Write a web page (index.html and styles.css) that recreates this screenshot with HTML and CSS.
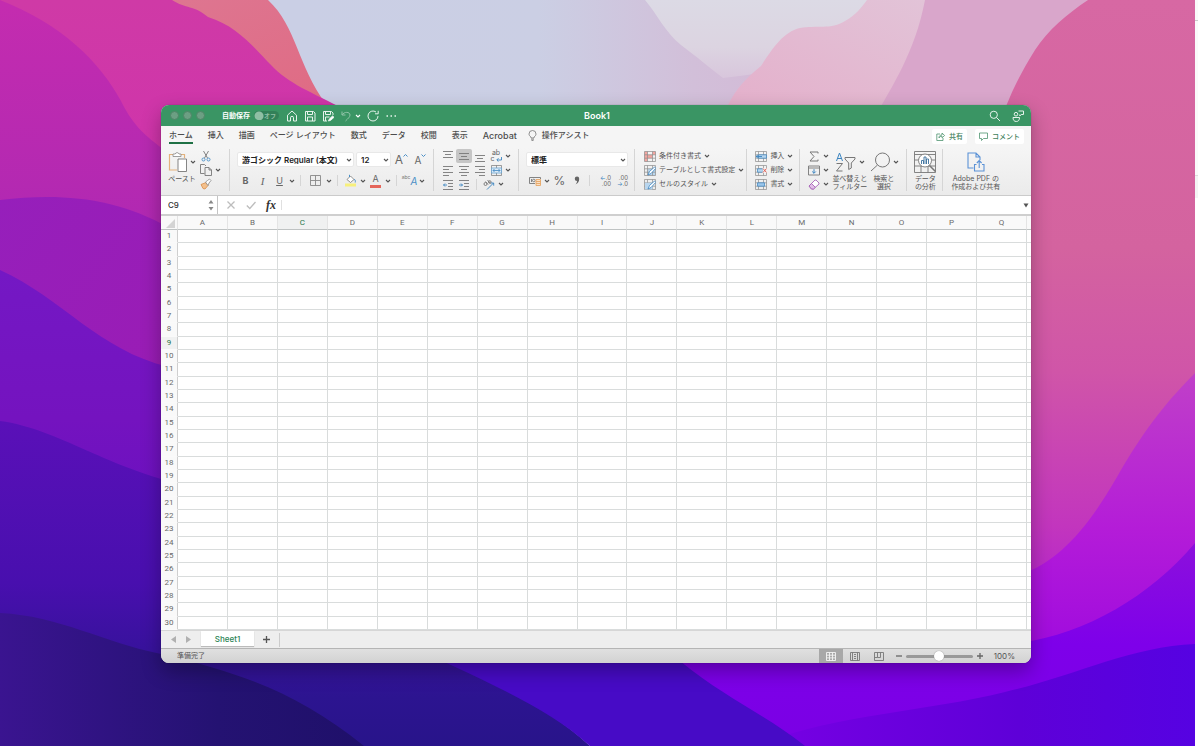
FILE: index.html
```html
<!DOCTYPE html>
<html lang="ja">
<head>
    <meta charset="UTF-8">
    <meta name="viewport" content="width=device-width, initial-scale=1.0">
    <title>Book1</title>
    <link rel="stylesheet" href="styles.css">
</head>
<body>
    <!-- shared icons -->
    <svg class="defs" aria-hidden="true">
        <symbol id="chev" viewBox="0 0 6 6"><path d="M1 2l2 2 2-2" fill="none" stroke="currentColor" stroke-width="1.1"/></symbol>
        <symbol id="sheet" viewBox="0 0 12 11"><path d="M.5.5h11v10H.5zM.5 3.8h11M.5 7.2h11M3.5.5v10M8.5.5v10" fill="none" stroke="#8c8c8c" stroke-width=".7"/></symbol>
    </svg>

    <svg class="wallpaper" viewBox="0 0 1195 746" preserveAspectRatio="none" aria-hidden="true">
        <defs>
            <linearGradient id="sky" x1="0" y1="0" x2="1" y2="0">
                <stop offset=".25" stop-color="#cacfe5"/><stop offset=".45" stop-color="#cbcfe4"/><stop offset=".58" stop-color="#d2bfd9"/><stop offset="1" stop-color="#d8a4cc"/>
            </linearGradient>
            <linearGradient id="haze" x1="0" y1="0" x2="0" y2="1">
                <stop offset="0" stop-color="#dcdae5"/><stop offset=".6" stop-color="#dcd4e1"/><stop offset="1" stop-color="#d8c6dc"/>
            </linearGradient>
            <linearGradient id="magenta" x1="0" y1="0" x2="0" y2="1">
                <stop offset="0" stop-color="#cf3aa6"/><stop offset=".5" stop-color="#d032ac"/><stop offset="1" stop-color="#b828b4"/>
            </linearGradient>
            <linearGradient id="plum" x1="0" y1="0" x2="0" y2="1">
                <stop offset="0" stop-color="#c42caf"/><stop offset="1" stop-color="#a426b4"/>
            </linearGradient>
            <linearGradient id="violet" x1="0" y1="0" x2="1" y2="1">
                <stop offset="0" stop-color="#961fbb"/><stop offset="1" stop-color="#9a1cb4"/>
            </linearGradient>
            <linearGradient id="purple" x1="0" y1="0" x2="0" y2="1">
                <stop offset="0" stop-color="#7418c4"/><stop offset=".6" stop-color="#7413bf"/><stop offset="1" stop-color="#6a10c0"/>
            </linearGradient>
            <linearGradient id="indigo" x1="0" y1="0" x2="0" y2="1">
                <stop offset="0" stop-color="#5a10b8"/><stop offset=".5" stop-color="#480fae"/><stop offset=".85" stop-color="#2c1490"/><stop offset="1" stop-color="#28148a"/>
            </linearGradient>
            <linearGradient id="night" x1="0" y1="0" x2="1" y2="0">
                <stop offset="0" stop-color="#3a1490"/><stop offset=".6" stop-color="#241272"/><stop offset="1" stop-color="#1f106a"/>
            </linearGradient>
            <linearGradient id="rose" x1="0" y1="0" x2="0" y2="1">
                <stop offset="0" stop-color="#d768a3"/><stop offset=".4" stop-color="#d4639f"/><stop offset=".6" stop-color="#d055a8"/><stop offset=".85" stop-color="#c235be"/><stop offset="1" stop-color="#b020d0"/>
            </linearGradient>
            <linearGradient id="orchid" x1="0" y1="0" x2="0" y2="1">
                <stop offset="0" stop-color="#c040c8"/><stop offset=".5" stop-color="#b41cd8"/><stop offset="1" stop-color="#9a06e0"/>
            </linearGradient>
            <linearGradient id="electric" x1="0" y1="0" x2="0" y2="1">
                <stop offset="0" stop-color="#8c10dc"/><stop offset=".5" stop-color="#7e00ea"/><stop offset="1" stop-color="#7a00e4"/>
            </linearGradient>
            <linearGradient id="deep" x1="0" y1="0" x2="1" y2="0">
                <stop offset="0" stop-color="#7800e4"/><stop offset=".6" stop-color="#5e00d8"/><stop offset="1" stop-color="#5602e2"/>
            </linearGradient>
            <linearGradient id="petal" x1="0" y1="1" x2="1" y2="0">
                <stop offset="0" stop-color="#e4b0cb"/><stop offset="1" stop-color="#e2c4d8"/>
            </linearGradient>
            <linearGradient id="coral" x1="0" y1="0" x2="1" y2="1">
                <stop offset="0" stop-color="#dd7a96"/><stop offset="1" stop-color="#e06880"/>
            </linearGradient>
        </defs>
        <path fill="url(#sky)" d="M0 0h1195v746H0z"/>
        <path fill="url(#haze)" d="M645 0c12 14 20 32 36 45 16 12 28 22 42 33 30-4 60-6 90-20L935 0z"/>
        <path fill="url(#petal)" d="M728 105c8-16 18-27 33-39 12-18 22-34 39-38 16-3 31 2 45-7 11-6 16-13 22-21h70v105z"/>
        <path fill="#d9a6cb" d="M925 0h180v120H873c20-35 42-68 52-120z"/>
        <path fill="url(#rose)" d="M1088 0h107v620H960V180c20-30 35-50 47-76 8-20 18-38 28-54 13-20 32-36 53-50z"/>
        <path fill="url(#orchid)" d="M1195 373c-32 32-54 62-78 104-30 52-58 84-97 98v110h175z"/>
        <path fill="url(#electric)" d="M1195 543c-46 54-108 90-175 100H600v103h595z"/>
        <path fill="url(#deep)" d="M1195 644c-66 3-120 32-190 48-80 20-170 22-250 54h440z"/>
        <path fill="url(#coral)" d="M0 0h268c29 27 29 65 58 104l14 40H0z"/>
        <path fill="url(#magenta)" d="M0 0h172c14 9 22 5 36 17 30 9 48 33 63 48 18 19 40 27 75 45v290H0z"/>
        <path fill="url(#plum)" d="M0 0c62 24 100 62 121 101 10 20 20 33 48 52v217H0z"/>
        <path fill="url(#violet)" d="M0 200c60-7 116-3 169 28v200H0z"/>
        <path fill="url(#purple)" d="M0 270c62 28 98 80 169 97v150H0z"/>
        <path fill="url(#indigo)" d="M0 421c60 8 105 48 200 68l230 164c60 28 112 49 160 93H0z"/>
        <path fill="#470bc6" d="M400 640c60 32 140 60 190 106h215c-40-32-80-48-125-85z"/>
        <path fill="url(#night)" d="M0 613c60 3 102 29 161 41 84 20 138 40 203 92H0z"/>
    </svg>

    <main class="desktop">
        <div class="window">
            <header class="titlebar">
                <div class="title-left">
                    <div class="lights"><i></i><i></i><i></i></div>
                    <label class="autosave">自動保存
                        <span class="toggle"><input type="checkbox"><span>オフ</span></span>
                    </label>
                    <div class="quick">
                        <button aria-label="ホーム"><svg width="12" height="12" viewBox="0 0 12 12"><path d="M1.5 5.2L6 1l4.500 4.200V11H7.500V7.800a1.500 1.500 0 0 0-3 0V11h-3z"/></svg></button>
                        <button aria-label="保存"><svg width="12" height="12" viewBox="0 0 12 12"><path d="M1.500 1.500h8l1.500 1.500v8h-9.500zM3.500 1.500v3h5v-3M3.500 11V7h5v4"/></svg></button>
                        <button aria-label="名前を付けて保存"><svg width="12" height="12" viewBox="0 0 12 12"><path d="M5 11H1.500V1.500h8L11 3v2M3.500 1.500v3h5v-3M3.500 11V7h4"/><path d="M6.500 11l1-2.200L10.500 6 12 7.300 8.800 10.200z" fill="#fff"/></svg></button>
                        <span class="pair">
                            <button class="dim" aria-label="元に戻す"><svg width="12" height="12" viewBox="0 0 12 12"><path d="M2 1.500V5h3.500M2 5c2-3.500 8-3.500 8 0 0 2-2 3.500-4.500 6"/></svg></button>
                            <button aria-label="元に戻す一覧"><svg width="6" height="6"><use href="#chev"/></svg></button>
                        </span>
                        <button aria-label="繰り返し"><svg width="12" height="12" viewBox="0 0 12 12"><path d="M11 6a5 5 0 1 1-2-4M11.200.8v3H8"/></svg></button>
                        <button aria-label="その他"><svg width="12" height="12" viewBox="0 0 12 12"><path d="M1.500 6h1.500M5.500 6H7M9.500 6H11" stroke-width="1.500"/></svg></button>
                    </div>
                </div>
                <h1>Book1</h1>
                <div class="title-right">
                    <button aria-label="検索"><svg width="12" height="12" viewBox="0 0 12 12"><circle cx="4.800" cy="4.800" r="3.600"/><path d="M7.500 7.500L11 11"/></svg></button>
                    <button aria-label="共同編集"><svg width="12" height="12" viewBox="0 0 12 12"><circle cx="4" cy="4.200" r="1.800"/><path d="M1 7.500h6.500c0 2.500-1 4-3.200 4S1 10 1 7.500zM6.500 1h5v3.500H9.200L7.800 6V4.500"/></svg></button>
                </div>
            </header>

            <div class="menu">
                <nav>
                    <a class="active" href="#home">ホーム</a>
                    <a href="#insert">挿入</a>
                    <a href="#draw">描画</a>
                    <a href="#layout">ページ レイアウト</a>
                    <a href="#formulas">数式</a>
                    <a href="#data">データ</a>
                    <a href="#review">校閲</a>
                    <a href="#view">表示</a>
                    <a class="latin" href="#acrobat">Acrobat</a>
                    <a class="assist" href="#assist"><svg width="9" height="11" viewBox="0 0 9 11"><path d="M3 8V7C1.800 6.200 1 5.200 1 4a3.500 3.500 0 0 1 7 0c0 1.200-.8 2.200-2 3v1zM3 9.200h3M3.500 10.500h2" fill="none" stroke="#777" stroke-width=".8"/></svg>操作アシスト</a>
                </nav>
                <div class="share">
                    <button><svg width="9" height="9" viewBox="0 0 9 9"><path d="M4 2H.8v6.500H7V6M3 6c0-2.200 1.200-3 3-3V1l2.600 2.500L6 5.800V4.200C4.500 4.200 3.600 4.800 3 6z"/></svg>共有</button>
                    <button><svg width="9" height="9" viewBox="0 0 9 9"><path d="M.5 1h8v5.500H4.500L2.500 8.500v-2h-2z"/></svg>コメント</button>
                </div>
            </div>

            <div class="ribbon">
                <section class="group clip">
                    <button class="big paste">
                        <span class="art"><svg width="20" height="22" viewBox="0 0 20 22"><path d="M5 3.500H1.500V19H9M13 3.500h3.500V7" fill="none" stroke="#e3b27c" stroke-width="1.200"/><path d="M5 5.500V3h2.200a2 2 0 0 1 3.800 0H13v2.500z" fill="#fff" stroke="#888" stroke-width=".8"/><path d="M10 8h8.500v12.500H10z" fill="#fff" stroke="#777" stroke-width=".9"/></svg><svg width="6" height="6"><use href="#chev"/></svg></span>
                        ペースト
                    </button>
                    <div class="stack">
                        <button aria-label="切り取り"><svg width="12" height="12" viewBox="0 0 12 12" fill="none" stroke-width=".9"><path d="M3.500 1l4 7M8.500 1l-4 7" stroke="#777"/><circle cx="3.500" cy="9.500" r="1.500" stroke="#4a8fc6"/><circle cx="8.500" cy="9.500" r="1.500" stroke="#4a8fc6"/></svg></button>
                        <button aria-label="コピー"><svg width="12" height="12" viewBox="0 0 12 12" fill="none" stroke="#777" stroke-width=".9"><path d="M4.500 9.500h-4v-9h4l1.500 1.500M5 3.500h4L11.500 6v5.500H5zM9 3.500V6h2.500"/></svg><svg width="6" height="6"><use href="#chev"/></svg></button>
                        <button aria-label="書式のコピー"><svg width="12" height="12" viewBox="0 0 12 12"><path d="M1 6.500l5-2 2 3-3 3.500-2-.5z" fill="#f3c08c" stroke="#d98e4a" stroke-width=".8"/><path d="M5.500 4l2-1.500L9.500 1l1.500 1.500L9 5 8 7.500z" fill="#fff" stroke="#888" stroke-width=".8"/></svg></button>
                    </div>
                </section>

                <section class="group rows font">
                    <div class="row pickers">
                        <span class="picker face"><select aria-label="フォント"><option>游ゴシック Regular (本文)</option></select><svg width="6" height="6"><use href="#chev"/></svg></span>
                        <span class="picker size"><select aria-label="フォント サイズ"><option>12</option></select><svg width="6" height="6"><use href="#chev"/></svg></span>
                        <button class="tool big-a">A<svg width="5" height="5" viewBox="0 0 5 5"><path d="M.5 3.500l2-2 2 2"/></svg></button>
                        <button class="tool small-a">A<svg width="5" height="5" viewBox="0 0 5 5"><path d="M.5 1.500l2 2 2-2"/></svg></button>
                    </div>
                    <div class="row">
                        <button class="tool"><b>B</b></button>
                        <button class="tool"><em class="serif">I</em></button>
                        <button class="tool"><u>U</u></button>
                        <button class="more" aria-label="下線"><svg width="6" height="6"><use href="#chev"/></svg></button>
                        <span class="bar"></span>
                        <button class="tool wide" aria-label="罫線"><svg width="11" height="11" viewBox="0 0 11 11" fill="none" stroke="#888" stroke-width=".9"><path d="M.5.500h10v10H.5zM5.500.5v10M.5 5.500h10"/></svg></button>
                        <button class="more" aria-label="罫線一覧"><svg width="6" height="6"><use href="#chev"/></svg></button>
                        <span class="bar"></span>
                        <button class="tool" aria-label="塗りつぶし"><svg width="13" height="13" viewBox="0 0 13 13"><path d="M1 9.500h11v3H1z" fill="#f7f07c"/><path d="M3 5.500L6.500 2l3.500 3.500-3.500 3z" fill="#fff" stroke="#777" stroke-width=".8"/><path d="M5.500 3V.8M10 5.500c1.500 0 1.500 1.500 1.200 3" fill="none" stroke="#4a8fc6"/></svg></button>
                        <button class="more" aria-label="塗りつぶしの色"><svg width="6" height="6"><use href="#chev"/></svg></button>
                        <button class="tool fontcolor">A</button>
                        <button class="more" aria-label="フォントの色"><svg width="6" height="6"><use href="#chev"/></svg></button>
                        <span class="bar"></span>
                        <button class="tool ruby"><sup>abc</sup><em>A</em></button>
                        <button class="more" aria-label="ふりがな"><svg width="6" height="6"><use href="#chev"/></svg></button>
                    </div>
                </section>

                <section class="group thirds align">
                    <div class="row">
                        <button class="tool" aria-label="上揃え"><svg width="10" height="11" viewBox="0 0 10 11"><path d="M0 .5h10M2 3.500h6M0 6.500h10"/></svg></button>
                        <button class="tool on" aria-label="上下中央揃え"><svg width="10" height="11" viewBox="0 0 10 11"><path d="M0 2.500h10M2 5.500h6M0 8.500h10"/></svg></button>
                        <button class="tool" aria-label="下揃え"><svg width="10" height="11" viewBox="0 0 10 11"><path d="M0 4.500h10M2 7.500h6M0 10.500h10"/></svg></button>
                        <button class="tool wrap"><span>ab</span><span class="arrow">c<svg width="6" height="5" viewBox="0 0 6 5"><path d="M5.500 0v3H1M2.500 1.200L.8 3l1.700 1.700" stroke="#3b84c0"/></svg></span></button>
                        <button class="more" aria-label="折り返し"><svg width="6" height="6"><use href="#chev"/></svg></button>
                    </div>
                    <div class="row">
                        <button class="tool" aria-label="左揃え"><svg width="10" height="11" viewBox="0 0 10 11"><path d="M0 1.500h10M0 4.500h6M0 7.500h10M0 10.500h6"/></svg></button>
                        <button class="tool" aria-label="中央揃え"><svg width="10" height="11" viewBox="0 0 10 11"><path d="M0 1.500h10M2 4.500h6M0 7.500h10M2 10.500h6"/></svg></button>
                        <button class="tool" aria-label="右揃え"><svg width="10" height="11" viewBox="0 0 10 11"><path d="M0 1.500h10M4 4.500h6M0 7.500h10M4 10.500h6"/></svg></button>
                        <button class="tool" aria-label="セルの結合"><svg width="11" height="11" viewBox="0 0 11 11"><path d="M.5.500h10v10H.5zM5.500.5V3M5.500 8v2.500" stroke-width=".7"/><path d="M.5 3h10v5H.5z" fill="#dcebf7" stroke="#6aa3d0" stroke-width=".8"/><path d="M2 5.500h7M3.500 4L2 5.500 3.500 7M7.500 4L9 5.500 7.500 7" stroke="#3b84c0" stroke-width=".8"/></svg></button>
                        <button class="more" aria-label="セルの結合一覧"><svg width="6" height="6"><use href="#chev"/></svg></button>
                    </div>
                    <div class="row">
                        <button class="tool" aria-label="インデントを減らす"><svg width="10" height="11" viewBox="0 0 10 11"><path d="M0 1.500h10M5 4.500h5M5 7.500h5M0 10.500h10"/><path d="M4 6H.5M2 4.500L.5 6 2 7.500" stroke="#3b84c0"/></svg></button>
                        <button class="tool" aria-label="インデントを増やす"><svg width="10" height="11" viewBox="0 0 10 11"><path d="M0 1.500h10M5 4.500h5M5 7.500h5M0 10.500h10"/><path d="M0 6h3.500M2 4.500L3.500 6 2 7.500" stroke="#3b84c0"/></svg></button>
                        <span class="bar"></span>
                        <button class="tool" aria-label="方向"><svg width="12" height="11" viewBox="0 0 12 11"><circle cx="2.500" cy="5" r="1.500"/><path d="M2.500 2.500l2.500 3M4.500 1l3 3.500"/><circle cx="6.800" cy="3" r="1.300"/><path d="M4 10.500L10.500 4M8 4h2.700v2.700" stroke="#3b84c0"/></svg></button>
                        <button class="more" aria-label="方向一覧"><svg width="6" height="6"><use href="#chev"/></svg></button>
                    </div>
                </section>

                <section class="group rows number">
                    <div class="row pickers">
                        <span class="picker fill"><select aria-label="表示形式"><option>標準</option></select><svg width="6" height="6"><use href="#chev"/></svg></span>
                    </div>
                    <div class="row">
                        <button class="tool" aria-label="通貨"><svg width="12" height="10" viewBox="0 0 12 10" fill="none" stroke-width=".9"><path d="M6 7.500H.5v-6h11V3M2.500 3v3" stroke="#777"/><circle cx="4.800" cy="4.500" r="1.300" stroke="#777"/><path d="M7 3.500h4.500v6H7zM7 5.500h4.500M7 7.500h4.500" fill="#fbe0c4" stroke="#e6a665"/></svg></button>
                        <button class="more" aria-label="通貨一覧"><svg width="6" height="6"><use href="#chev"/></svg></button>
                        <button class="tool pct">%</button>
                        <button class="tool" aria-label="桁区切り"><svg width="6" height="9" viewBox="0 0 6 9"><path d="M3 .5a2.200 2.200 0 0 1 2.200 2.300C5.200 5.500 4 7.500 1.500 8.500c1-1.200 1.500-2.200 1.500-3.500A2.200 2.200 0 0 1 3 .5z" fill="#666"/></svg></button>
                        <span class="bar"></span>
                        <button class="tool dec"><i>←</i>.0<br>.00</button>
                        <button class="tool dec">.00<br><i>→</i>.0</button>
                    </div>
                </section>

                <section class="group thirds styles">
                    <button class="item"><svg width="12" height="11" viewBox="0 0 12 11"><path d="M.5.500h3v10h-3zM3.500 3.800h5v3.400h-5zM8.500.5h3v3.300h-3z" fill="#f3a6a0"/><use href="#sheet"/></svg>条件付き書式<svg width="6" height="6"><use href="#chev"/></svg></button>
                    <button class="item"><svg width="12" height="11" viewBox="0 0 12 11"><path d="M3.500 3.800h8v6.700h-8z" fill="#b9d6ee"/><use href="#sheet"/><path d="M4 10l1.500-3.500L10.500 2l1.300 1.300L7 8.500z" fill="#fff" stroke="#3b84c0" stroke-width=".8"/></svg>テーブルとして書式設定<svg width="6" height="6"><use href="#chev"/></svg></button>
                    <button class="item"><svg width="12" height="11" viewBox="0 0 12 11"><use href="#sheet"/><path d="M1 3.800h7.500v6.700H1z" fill="#b9d6ee"/><path d="M4 10l1.500-3.500L10.500 2l1.300 1.300L7 8.500z" fill="#fff" stroke="#3b84c0" stroke-width=".8"/></svg>セルのスタイル<svg width="6" height="6"><use href="#chev"/></svg></button>
                </section>

                <section class="group thirds cells">
                    <button class="item"><svg width="12" height="11" viewBox="0 0 12 11"><use href="#sheet"/><path d="M3.500 3.800h8v3.400h-8z" fill="#b9d6ee" stroke="#3b84c0" stroke-width=".7"/><path d="M7 5.500H1M3 3.800L1 5.500l2 1.700" fill="none" stroke="#3b84c0" stroke-width=".9"/></svg>挿入<svg width="6" height="6"><use href="#chev"/></svg></button>
                    <button class="item"><svg width="12" height="11" viewBox="0 0 12 11"><use href="#sheet"/><path d="M2.500 3.800h5v3.400h-5z" fill="#b9d6ee" stroke="#3b84c0" stroke-width=".7"/><path d="M7.500 3h4.500v5H7.500z" fill="#f1f1f1"/><path d="M8 3.500l3.500 4M11.500 3.500L8 7.500" stroke="#e0554a" fill="none" stroke-width=".9"/></svg>削除<svg width="6" height="6"><use href="#chev"/></svg></button>
                    <button class="item"><svg width="12" height="11" viewBox="0 0 12 11"><use href="#sheet"/><path d="M2.500 3.800h7v3.400h-7z" fill="#9cc6ea" stroke="#3b84c0" stroke-width=".7"/></svg>書式<svg width="6" height="6"><use href="#chev"/></svg></button>
                </section>

                <section class="group edit">
                    <div class="thirds">
                        <button class="item" aria-label="合計"><svg width="12" height="11" viewBox="0 0 12 11"><path d="M10 2.500V1H2l4 4.500L2 10h8V8.500" fill="none" stroke="#777"/></svg><svg width="6" height="6"><use href="#chev"/></svg></button>
                        <button class="item" aria-label="フィル"><svg width="12" height="11" viewBox="0 0 12 11" fill="none"><path d="M.5 1h11v9H.5zM.5 3h11" stroke="#777" stroke-width=".9"/><path d="M6 4.200v4M4.200 6.500L6 8.300l1.800-1.800" stroke="#3b84c0"/></svg><svg width="6" height="6"><use href="#chev"/></svg></button>
                        <button class="item" aria-label="クリア"><svg width="12" height="11" viewBox="0 0 12 11"><path d="M1 7l6-6h1l3 3v1l-5.500 5h-2z" fill="#fff" stroke="#a864b8" stroke-width=".9"/><path d="M1 7l2.500-2.500 3.800 3.800L5.500 10h-2z" fill="#e2bfe8" stroke="#a864b8" stroke-width=".9"/></svg><svg width="6" height="6"><use href="#chev"/></svg></button>
                    </div>
                    <button class="big">
                        <span class="art"><svg width="22" height="20" viewBox="0 0 22 20" fill="none" stroke-width="1"><path d="M1.500 9L4.500 1l3 8M2.500 6.500h4" stroke="#3b84c0"/><path d="M1.500 11.500h6l-6 7.500h6M10 5.500h10v1.500l-3.700 4v5l-2.600 1.500V11L10 7z" stroke="#777"/></svg><svg width="6" height="6"><use href="#chev"/></svg></span>
                        並べ替えと<br>フィルター
                    </button>
                    <button class="big find">
                        <span class="art"><svg width="21" height="20" viewBox="0 0 21 20" fill="none" stroke="#777"><circle cx="12.500" cy="8" r="7"/><path d="M7.500 13L1 19"/></svg><svg width="6" height="6"><use href="#chev"/></svg></span>
                        <span class="caption">検索と<br>選択</span>
                    </button>
                </section>

                <section class="group">
                    <button class="big">
                        <span class="art"><svg width="22" height="22" viewBox="0 0 22 22" fill="none" stroke="#777" stroke-width=".9"><path d="M.5.500h21v21H.5zM.5 3.500h21M.5 9h21M.5 15h21M7 15v6.500M14 15v6.500"/><circle cx="11" cy="9.500" r="6.500" fill="#fff"/><path d="M15.500 14.500l6 6" stroke-width="1.500"/><path d="M7.500 13V9.500h2V13M10 13V6h2v7M12.500 13V8h2v5" stroke="#3b6f9c"/></svg></span>
                        データ<br>の分析
                    </button>
                </section>

                <section class="group last">
                    <button class="big">
                        <span class="art"><svg width="18" height="20" viewBox="0 0 18 20" fill="none" stroke="#5b92d6" stroke-width="1.100"><path d="M6.500 16H1V1h8l4 4v3M9 1v4h4M9.500 12.500H7.500v6.500h9.500v-6.500h-2M12.200 16V9M9.800 11l2.400-2.500 2.400 2.500"/></svg></span>
                        Adobe PDF の<br>作成および共有
                    </button>
                </section>
            </div>

            <div class="formula">
                <div class="namebox">
                    <input type="text" value="C9" aria-label="名前ボックス">
                    <svg width="6" height="12" viewBox="0 0 6 12"><path d="M.5 4.500L3 1l2.500 3.500zM.5 8L3 11.500 5.500 8z" fill="#888"/></svg>
                </div>
                <div class="fx">
                    <button aria-label="キャンセル"><svg width="10" height="10" viewBox="0 0 10 10"><path d="M1.500 1.500l7 7M8.500 1.500l-7 7" stroke="#bdbdbd" stroke-width="1.300"/></svg></button>
                    <button aria-label="入力"><svg width="10" height="10" viewBox="0 0 10 10"><path d="M.8 5.500l3 3L9.500 2" fill="none" stroke="#bdbdbd" stroke-width="1.300"/></svg></button>
                    <button class="fn"><em>fx</em></button>
                </div>
                <input class="entry" type="text" aria-label="数式バー">
                <button class="expand" aria-label="数式バーの展開"><svg width="6" height="5" viewBox="0 0 6 5"><path d="M.5.500h5L3 4.500z" fill="#555"/></svg></button>
            </div>

            <div class="grid">
                <table>
                    <colgroup id="cols"><col class="num"></colgroup>
                    <thead><tr id="head"><th class="corner"><svg width="9" height="9" viewBox="0 0 9 9"><path d="M9 0v9H0z" fill="#d4d4d4"/></svg></th></tr></thead>
                    <tbody id="body"></tbody>
                </table>
            </div>

            <div class="sheets">
                <button class="nav" aria-label="前のシート"><svg width="5" height="7" viewBox="0 0 5 7"><path d="M5 0v7L0 3.500z" fill="#b0b0b0"/></svg></button>
                <button class="nav" aria-label="次のシート"><svg width="5" height="7" viewBox="0 0 5 7"><path d="M0 0v7l5-3.500z" fill="#b0b0b0"/></svg></button>
                <button class="sheet">Sheet1</button>
                <button class="add" aria-label="シートの追加"><svg width="7" height="7" viewBox="0 0 7 7"><path d="M3.500 0v7M0 3.500h7" stroke="#555" stroke-width="1.300"/></svg></button>
            </div>

            <footer class="status">
                <span>準備完了</span>
                <div class="views">
                    <button class="on" aria-label="標準"><svg width="10" height="9" viewBox="0 0 10 9"><path d="M.5.500h9v8h-9zM3.500.5v8M6.500.5v8M.5 3.200h9M.5 5.900h9" fill="none" stroke="#f4f4f4" stroke-width=".9"/></svg></button>
                    <button aria-label="ページ レイアウト"><svg width="10" height="9" viewBox="0 0 10 9"><path d="M.5.500h9v8h-9zM2.500.5v8M7.500.5v8M4 2.500h2M4 4.500h2M4 6.500h2" fill="none" stroke="#777" stroke-width=".9"/></svg></button>
                    <button aria-label="改ページ"><svg width="10" height="9" viewBox="0 0 10 9"><path d="M.5.500h9v8h-9zM3.500.5v5h-3M6.500.5v5h-3" fill="none" stroke="#777" stroke-width=".9"/></svg></button>
                </div>
                <div class="zoom">
                    <button aria-label="縮小"><svg width="6" height="6" viewBox="0 0 6 6"><path d="M0 3h6" stroke="#666" stroke-width="1.300"/></svg></button>
                    <input type="range" min="0" max="100" value="50" aria-label="ズーム">
                    <button aria-label="拡大"><svg width="6" height="6" viewBox="0 0 6 6"><path d="M0 3h6M3 0v6" stroke="#666" stroke-width="1.300"/></svg></button>
                    <output>100%</output>
                </div>
            </footer>
        </div>
    </main>
    <aside class="edge"></aside>

    <script src="script.js"></script>
</body>
</html>
```

FILE: styles.css
```css
* {
    box-sizing: border-box;
}
body {
    margin: 0;
    min-height: 100vh;
    display: flex;
    background: #fff;
    color: #4c4c4c;
    font-family: Inter, "Noto Sans CJK JP", sans-serif;
    font-size: 8px;
    line-height: 10px;
}
button, input, select {
    margin: 0;
    padding: 0;
    border: 0;
    background: none;
    color: inherit;
    font: inherit;
}
button {
    display: flex;
    align-items: center;
    justify-content: center;
}
svg {
    display: block;
    flex: none;
}
a {
    color: inherit;
    text-decoration: none;
}
.defs {
    position: absolute;
    width: 0;
    height: 0;
}

/* desktop */
.wallpaper {
    position: absolute;
    z-index: -1;
    top: 0;
    left: 0;
    width: calc(100% - 3px);
    height: 100%;
}
.desktop {
    flex: 1;
    display: flex;
    padding: 105px 164px 83px 161px;
}
.edge {
    width: 3px;
    background: linear-gradient(#fafafa 20px, #ccc 20px, #ccc 21px, #fafafa 21px, #fafafa 175px, #ddd 175px, #ddd 176px, #f4f4f4 176px, #f4f4f4 198px, #fff 198px);
}
.window {
    flex: 1;
    display: flex;
    flex-direction: column;
    min-width: 0;
    overflow: hidden;
    border-radius: 8px;
    background: #f3f3f3;
    box-shadow: 0 0 1px rgba(0, 0, 0, .5), 0 8px 20px rgba(0, 0, 0, .3);
}

/* title bar */
.titlebar {
    display: grid;
    grid-template-columns: 1fr auto 1fr;
    align-items: center;
    height: 21px;
    padding: 0 7px 0 9px;
    background: #3a9564;
    color: #fff;
}
.titlebar h1 {
    margin: 0;
    font-size: 9px;
    font-weight: 600;
    line-height: 12px;
}
.titlebar svg {
    fill: none;
    stroke: #e6f3ec;
}
.title-left, .title-right, .lights, .quick, .pair, .autosave {
    display: flex;
    align-items: center;
}
.lights {
    gap: 4px;
    margin-right: 17px;
}
.lights i {
    width: 9px;
    height: 9px;
    border: 1px solid #4f8466;
    border-radius: 50%;
    background: #6c9f83;
}
.autosave {
    gap: 4px;
    font-size: 7px;
    font-weight: 700;
    white-space: nowrap;
}
.toggle {
    position: relative;
    display: flex;
}
.toggle input {
    appearance: none;
    width: 25px;
    height: 9px;
    border-radius: 5px;
    background: radial-gradient(circle at 5px 5px, #8fbfa4 4px, #328058 5px);
}
.toggle span {
    position: absolute;
    top: 0;
    right: 3px;
    color: #8fbfa4;
    font-size: 6px;
    line-height: 9px;
}
.quick {
    gap: 6px;
    margin-left: 7px;
}
.pair {
    gap: 3px;
}
.dim {
    opacity: .5;
}
.title-right {
    justify-content: flex-end;
    gap: 11px;
}

/* tabs */
.menu {
    display: flex;
    justify-content: space-between;
    height: 22px;
    padding: 0 7px 0 8px;
    background: #f5f5f5;
}
.menu nav {
    display: flex;
    align-items: flex-start;
    gap: 15px;
    font-weight: 500;
    white-space: nowrap;
}
.menu nav a {
    padding-top: 4px;
    height: 18px;
    line-height: 11px;
}
.menu nav .active {
    border-bottom: 2px solid #1f7145;
}
.menu nav .latin {
    font-size: 9px;
}
.menu nav .assist {
    display: flex;
    gap: 5px;
    margin-left: -4px;
}
.share {
    display: flex;
    gap: 8px;
    padding-top: 3px;
}
.share button {
    gap: 4px;
    height: 15px;
    padding: 0 4px;
    border-radius: 2px;
    background: #fff;
    color: #3f7f5c;
    font-size: 7px;
    font-weight: 500;
}
.share svg {
    fill: none;
    stroke: #4f9470;
    stroke-width: 0.8;
}

/* ribbon */
.ribbon {
    display: flex;
    height: 48px;
    padding: 1px 0 4px;
    border-bottom: 1px solid #cbcbcb;
    background: linear-gradient(#f5f5f5, #ebebeb);
    color: #555;
    font-size: 7px;
    line-height: 8px;
    white-space: nowrap;
}
.group {
    display: flex;
    padding: 0 6px 0 7px;
    border-right: 1px solid #d5d5d5;
}
.last {
    border: 0;
}
.group + .last,
.cells,
.edit {
    padding-left: 8px;
}
.rows {
    display: grid;
    grid-template-rows: 1fr 1fr;
}
.thirds {
    display: grid;
    grid-template-rows: repeat(3, 1fr);
}
.row {
    display: flex;
    align-items: center;
}
.big {
    flex-direction: column;
    justify-content: flex-start;
    line-height: 8px;
}
.art {
    display: flex;
    align-items: center;
    justify-content: center;
    gap: 2px;
    height: 26px;
}
.clip {
    gap: 4px;
}
.stack {
    display: grid;
    grid-template-rows: repeat(3, 1fr);
    justify-items: start;
    width: 23px;
}
.stack button {
    gap: 3px;
}
.pickers {
    gap: 2px;
}
.picker {
    position: relative;
    display: flex;
    align-items: center;
}
.picker select {
    appearance: none;
    width: 100%;
    height: 15px;
    padding: 0 4px;
    border: 1px solid #e8e8e8;
    border-radius: 2px;
    background: #fff;
    color: #222;
    font-size: 8px;
    font-weight: 600;
}
.picker svg {
    position: absolute;
    right: 2px;
}
.face {
    width: 117px;
}
.size {
    width: 35px;
}
.fill {
    flex: 1;
}
.font {
    padding-right: 4px;
}
.tool {
    width: 17px;
    height: 14px;
    color: #666;
    font-size: 9px;
}
.more {
    width: 8px;
    height: 14px;
}
.wide {
    width: 20px;
}
.serif {
    font-family: "Liberation Serif", serif;
    font-size: 11px;
}
.big-a svg,
.small-a svg {
    align-self: flex-start;
    fill: none;
    stroke: #4a8fc6;
}
.big-a {
    font-size: 12px;
}
.small-a {
    font-size: 10px;
}
.fontcolor {
    background: linear-gradient(#e5665b, #e5665b) center bottom / 11px 3px no-repeat;
    line-height: 9px;
    padding-bottom: 4px;
}
.ruby sup {
    align-self: flex-start;
    color: #777;
    font-size: 5px;
    line-height: 6px;
}
.ruby em {
    color: #4a8fc6;
    font-size: 10px;
}
.bar {
    width: 1px;
    height: 11px;
    margin: 0 4px;
    background: #d5d5d5;
}
.align {
    padding-left: 6px;
}
.align .tool {
    width: 16px;
}
.align .tool svg {
    fill: none;
    stroke: #777;
    stroke-width: 0.9;
}
.align .on {
    border-radius: 2px;
    background: #c6c6c6;
}
.tool.wrap {
    flex-direction: column;
    font-size: 7px;
    line-height: 6px;
}
.arrow {
    display: flex;
    align-items: flex-end;
    gap: 1px;
}
.tool i {
    color: #3b84c0;
    font-style: normal;
}
.pct {
    font-size: 12px;
}
.tool.dec {
    display: block;
    font-size: 6px;
    line-height: 6px;
    text-align: right;
}
.item {
    gap: 3px;
    justify-content: flex-start;
}
.styles {
    padding: 0 2px 0 9px;
}
.edit {
    gap: 3px;
    padding-right: 7px;
}
.find {
    align-items: flex-start;
}
.caption {
    padding-left: 3px;
}

/* formula bar */
.formula {
    display: flex;
    height: 18px;
    background: #fff;
    color: #333;
}
.namebox {
    display: flex;
    align-items: center;
    width: 57px;
    padding: 0 3px 0 7px;
    border-right: 1px solid #c4c4c4;
}
.namebox input {
    flex: 1;
    min-width: 0;
    font-weight: 500;
}
.fx {
    display: flex;
    align-items: center;
    gap: 10px;
    margin: 4px 0;
    padding: 0 5px 0 8px;
    border-right: 1px solid #e0e0e0;
}
.fn em {
    font-family: "Liberation Serif", serif;
    font-size: 12px;
    font-weight: 700;
}
.entry {
    flex: 1;
}
.expand {
    width: 10px;
}

/* cells */
.grid {
    flex: 1;
    display: grid;
    border-top: 2px solid #cfcfcf;
    background: #fff;
}
table {
    width: 100%;
    height: 100%;
    border-collapse: separate;
    border-spacing: 0;
    table-layout: fixed;
    font-family: Roboto, sans-serif;
}
.num {
    width: 17px;
}
.rest {
    width: 4px;
}
th, td {
    padding: 0;
    border: solid #d9dcdc;
    border-width: 0 1px 1px 0;
    line-height: 10px;
}
th {
    color: #6a6a6a;
    font-weight: 400;
    background: #f9f9f9;
}
thead th {
    height: 14px;
    border-color: #e4e4e4;
    border-bottom-color: #bfc3c3;
}
tbody th {
    border-color: #fafafa;
    border-right-color: #cfcfcf;
}
th.current {
    color: #217346;
    background: #f0f1f1;
}
.corner svg {
    margin: 1px 0 0 5px;
}
tr :last-child {
    border-right: 0;
}

/* sheet tabs */
.sheets {
    display: flex;
    align-items: center;
    height: 18px;
    padding-left: 5px;
    border-top: 1px solid #d6d6d6;
    background: #eee;
}
.nav {
    width: 15px;
    height: 17px;
}
.sheet {
    align-self: flex-start;
    width: 53px;
    height: 15px;
    margin-left: 5px;
    background: #fff;
    box-shadow: 0 1px 1px #bbb;
    color: #2c8455;
    font-weight: 500;
}
.add {
    width: 26px;
    height: 14px;
    border-right: 1px solid #ccc;
}

/* status bar */
.status {
    display: flex;
    align-items: center;
    height: 15px;
    padding: 0 16px;
    border-top: 1px solid #b5b5b5;
    background: linear-gradient(#e0e0e0, #d2d2d2);
    font-size: 7px;
    color: #555;
}
.views {
    display: flex;
    margin-left: auto;
}
.views button {
    width: 24px;
    height: 14px;
}
.views .on {
    background: #a8a8a8;
}
.zoom {
    display: flex;
    align-items: center;
    gap: 4px;
    margin-left: 5px;
    font-size: 8px;
}
.zoom input {
    appearance: none;
    width: 67px;
    height: 3px;
    border-radius: 2px;
    background: #999;
}
.zoom input::-webkit-slider-thumb {
    appearance: none;
    width: 10px;
    height: 10px;
    border-radius: 50%;
    background: #fff;
    box-shadow: 0 0 1px #777;
}
.zoom output {
    margin-left: 7px;
}
```

FILE: script.js
```js
const letters = 'ABCDEFGHIJKLMNOPQ'.split('');
const cols = document.getElementById('cols');
const head = document.getElementById('head');
const body = document.getElementById('body');

letters.forEach(letter => {
    cols.appendChild(document.createElement('col'));
    const th = document.createElement('th');
    th.textContent = letter;
    if (letter === 'C') th.className = 'current';
    head.appendChild(th);
});

// narrow strip of the next column
const rest = document.createElement('col');
rest.className = 'rest';
cols.appendChild(rest);
head.appendChild(document.createElement('th'));

for (let n = 1; n <= 30; n++) {
    const tr = document.createElement('tr');
    const th = document.createElement('th');
    th.textContent = n;
    if (n === 9) th.className = 'current';
    tr.appendChild(th);
    for (let i = 0; i <= letters.length; i++) {
        tr.appendChild(document.createElement('td'));
    }
    body.appendChild(tr);
}
```
